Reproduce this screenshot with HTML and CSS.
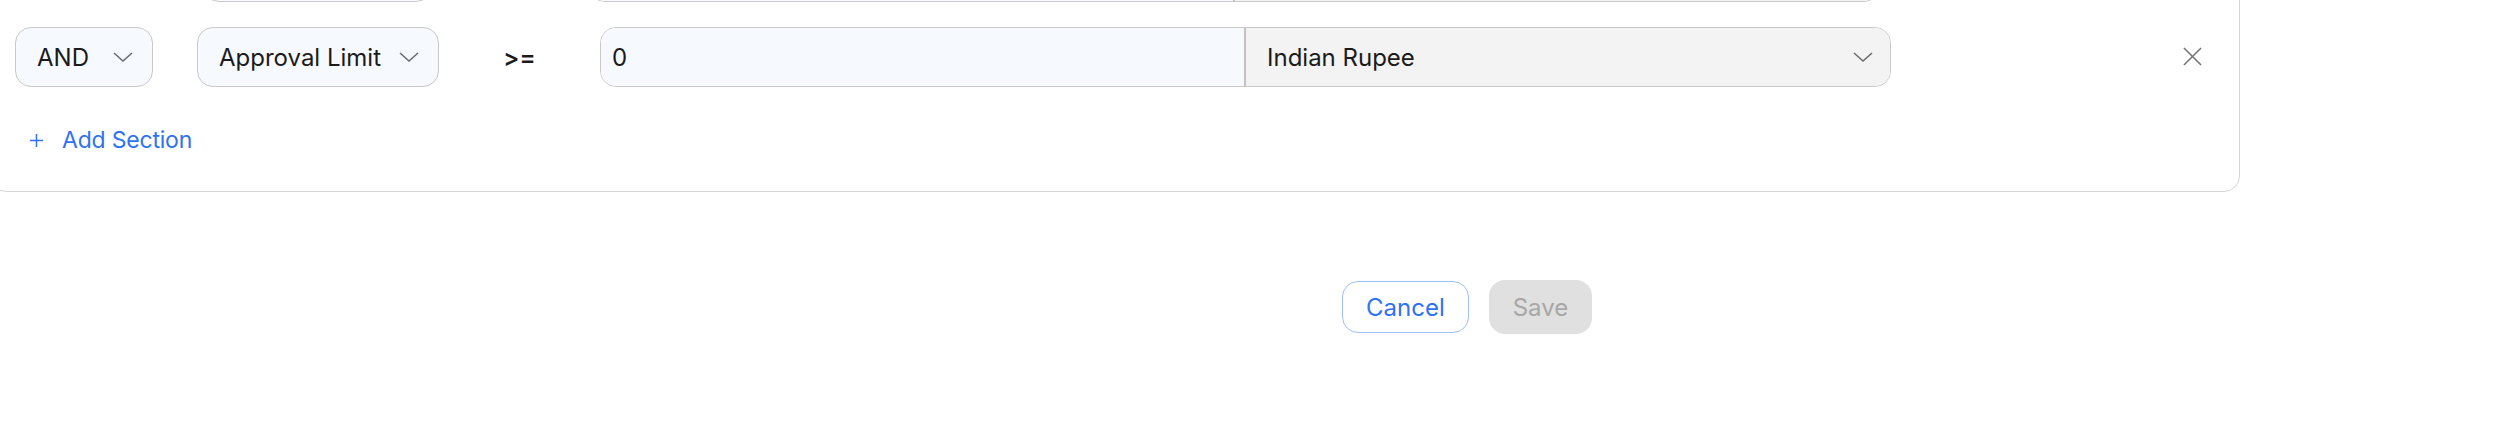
FILE: index.html
```html
<!DOCTYPE html>
<html>
<head>
<meta charset="utf-8">
<link rel="stylesheet" href="styles.css">
</head>
<body>
<div class="card">
  <div class="row row-prev">
    <div class="connector-empty"></div>
    <div class="select field-prev"><span>Department</span>
      <svg class="chev" viewBox="0 0 20 10"><path d="M1 1 L10 9 L19 1"/></svg></div>
    <div class="op">=</div>
    <div class="group">
      <div class="value"></div>
      <div class="currency"><span></span></div>
    </div>
  </div>
  <div class="row">
    <div class="select connector"><span>AND</span>
      <svg class="chev" viewBox="0 0 20 10"><path d="M1 1 L10 9 L19 1"/></svg></div>
    <div class="select field"><span>Approval Limit</span>
      <svg class="chev" viewBox="0 0 20 10"><path d="M1 1 L10 9 L19 1"/></svg></div>
    <div class="op">&gt;=</div>
    <div class="group">
      <div class="value">0</div>
      <div class="currency"><span>Indian Rupee</span>
        <svg class="chev" viewBox="0 0 20 10"><path d="M1 1 L10 9 L19 1"/></svg></div>
    </div>
    <button class="close" aria-label="Remove">
      <svg viewBox="0 0 20 20"><path d="M1 1 L19 19 M19 1 L1 19"/></svg>
    </button>
  </div>
  <button class="add">
    <svg class="plus" viewBox="0 0 14 14"><path d="M7 0 V14 M0 7 H14"/></svg>
    <span>Add Section</span>
  </button>
</div>
<div class="footer">
  <button class="btn cancel">Cancel</button>
  <button class="btn save" disabled>Save</button>
</div>
</body>
</html>
```

FILE: styles.css
```css
* { box-sizing: border-box; }
html, body { margin: 0; padding: 0; background: #ffffff; }
body {
  font-family: Inter, "Noto Sans", sans-serif;
  font-size: 24px;
  color: #1b1b1b;
  overflow: hidden;
  width: 2518px;
  height: 440px;
}
.card {
  margin: -100px 0 0 -10px;
  width: 2250px;
  border: 1px solid #d6d6d6;
  border-radius: 16px;
  padding: 41px 36px 35px 24px;
  display: flex;
  flex-direction: column;
  gap: 25px;
}
.row {
  display: flex;
  align-items: center;
  height: 60px;
  gap: 44px;
}
.select {
  height: 60px;
  border: 1px solid #c9c9c9;
  border-radius: 16px;
  background: #f6f9fe;
  display: flex;
  align-items: center;
  justify-content: space-between;
  padding: 0 19px 0 21px;
  white-space: nowrap;
}
.connector { width: 138px; }
.field { width: 242px; }
.connector-empty { width: 138px; height: 60px; }
.field-prev { width: 229px; margin-left: 6px; margin-right: -4px; }
.field-prev span { visibility: hidden; }
.chev {
  width: 20px;
  height: 10px;
  fill: none;
  stroke: #6a6a6a;
  stroke-width: 1.5;
  flex: none;
}
.op {
  width: 73px;
  text-align: center;
  font-weight: 600;
}
.row-prev .op { visibility: hidden; }
.group {
  display: flex;
  height: 60px;
  width: 1291px;
  border: 1px solid #c9c9c9;
  border-radius: 16px;
  overflow: hidden;
}
.value {
  width: 645px;
  background: #f6f9fe;
  border-right: 2px solid #c2c2c2;
  display: flex;
  align-items: center;
  padding-left: 11px;
}
.currency {
  flex: 1;
  background: #f3f3f3;
  display: flex;
  align-items: center;
  justify-content: space-between;
  padding: 0 17px 0 21px;
}
.close {
  margin-left: auto;
  width: 20px;
  height: 20px;
  padding: 0;
  border: 0;
  background: none;
  display: flex;
}
.close svg {
  width: 19px;
  height: 19px;
  fill: none;
  stroke: #737373;
  stroke-width: 1.6;
}
.add {
  align-self: flex-start;
  margin: 12px 0 0 13px;
  display: flex;
  align-items: center;
  gap: 19px;
  border: 0;
  background: none;
  padding: 0 2px;
  height: 32px;
  font-family: inherit;
  font-size: 23px;
  color: #2f73f0;
  letter-spacing: -0.2px;
}
.plus {
  width: 13px;
  height: 13px;
  fill: none;
  stroke: #2f73f0;
  stroke-width: 1.6;
}
.footer {
  display: flex;
  align-items: center;
  gap: 20px;
  padding-left: 1342px;
  margin-top: 88px;
}
.btn {
  font-family: inherit;
  font-size: 24px;
  border-radius: 16px;
  padding: 0 23px;
  cursor: pointer;
}
.cancel {
  height: 52px;
  background: #ffffff;
  border: 1px solid #9fbff7;
  color: #2f73f0;
}
.save {
  height: 54px;
  background: #e0e0e0;
  border: 0;
  color: #a7a7a7;
  padding: 0 24px;
}
```
